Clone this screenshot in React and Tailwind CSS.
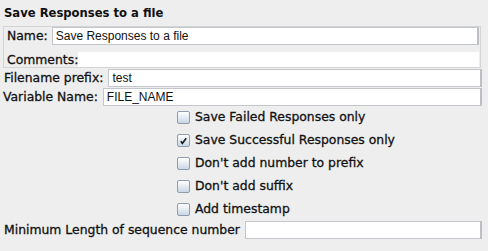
export default function App() {
  const checks = [
    { label: "Save Failed Responses only", checked: false },
    { label: "Save Successful Responses only", checked: true },
    { label: "Don't add number to prefix", checked: false },
    { label: "Don't add suffix", checked: false },
    { label: "Add timestamp", checked: false },
  ];

  const field =
    "h-[18px] bg-white border border-[#c3c7cc] border-r-2 border-r-[#bcc0c5] px-[3px] text-[12px] leading-[16px] text-[#111]";
  const inputFont = { fontFamily: '"Liberation Sans", Arial, sans-serif' };
  const label =
    "text-[12.4px] leading-[18px] text-[#111] whitespace-nowrap [-webkit-text-stroke:0.3px_#111]";

  return (
    <div
      className="w-[488px] h-[251px] bg-[#eeeeee] text-black overflow-hidden"
      style={{ fontFamily: '"DejaVu Sans", sans-serif' }}
    >
      <div className="pl-[4px] pt-[6px] h-[26px] text-[11.6px] font-bold leading-[14px] text-[#111]">
        Save Responses to a file
      </div>

      <div className="ml-[3px] mr-[7px] h-[42px] border border-[#d4d4d4] pl-[3px] pr-[1px] flex flex-col gap-[7px]">
        <div className="flex items-center gap-[4px] h-[18px]">
          <span className={label}>Name:</span>
          <div className={"flex-1 " + field} style={inputFont}>
            Save Responses to a file
          </div>
        </div>
        <div className="flex items-center gap-[0px] h-[15px]">
          <span className={label}>Comments:</span>
          <div className="flex-1 h-[15px] bg-white" />
        </div>
      </div>

      <div className="flex items-center gap-[5px] pl-[4px] pr-[6px] mt-[1px] h-[18px]">
        <span className={label}>Filename prefix:</span>
        <div className={"flex-1 " + field} style={inputFont}>
          test
        </div>
      </div>
      <div className="flex items-center gap-[5px] pl-[3px] pr-[6px] mt-[1px] h-[18px]">
        <span className={label}>Variable Name:</span>
        <div className={"flex-1 " + field} style={inputFont}>
          FILE_NAME
        </div>
      </div>

      <div className="flex flex-col gap-[5px] pl-[177px] mt-[2px]">
        {checks.map((c) => (
          <div key={c.label} className="flex items-center gap-[5px] h-[18px]">
            <div className="w-[13px] h-[13px] border border-[#8f9cab] rounded-[2px] bg-gradient-to-b from-white to-[#cad7e6] flex items-center justify-center">
              {c.checked && (
                <svg width="9" height="9" viewBox="0 0 9 9">
                  <path d="M1.8 5.2 L3.4 7.4 L7.2 2.2" fill="none" stroke="#1a1a1a" strokeWidth="1.7" />
                </svg>
              )}
            </div>
            <span className={label}>{c.label}</span>
          </div>
        ))}
      </div>

      <div className="flex items-center gap-[5px] pl-[4px] pr-[6px] mt-[3px] h-[18px]">
        <span className={label}>Minimum Length of sequence number</span>
        <div className={"flex-1 " + field} />
      </div>
    </div>
  );
}
